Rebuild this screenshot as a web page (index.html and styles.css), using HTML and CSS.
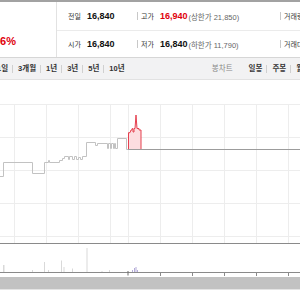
FILE: index.html
```html
<!DOCTYPE html>
<html lang="ko">
<head>
<meta charset="UTF-8">
<meta name="viewport" content="width=device-width, initial-scale=1.0">
<title>시세 차트</title>
<link rel="stylesheet" href="styles.css">
</head>
<body>
<div class="quote">
    <div class="today">
        <p class="rate"><span class="cut">+0.</span>6%</p>
    </div>
    <div class="summary">
        <div class="row">
            <div class="cell first"><span class="label">전일</span><em class="num">16,840</em></div>
            <div class="cell mid"><span class="label">고가</span><em class="num up">16,940</em><span class="sub">(상한가 21,850)</span></div>
            <div class="cell last"><span class="label">거래량</span><em class="num">152,318</em></div>
        </div>
        <div class="row">
            <div class="cell first"><span class="label">시가</span><em class="num">16,840</em></div>
            <div class="cell mid"><span class="label">저가</span><em class="num">16,840</em><span class="sub">(하한가 11,790)</span></div>
            <div class="cell last"><span class="label">거래대금</span><em class="num">2,571</em></div>
        </div>
    </div>
</div>

<div class="toolbar">
    <ul class="periods">
        <li>1일</li>
        <li>3개월</li>
        <li>1년</li>
        <li>3년</li>
        <li>5년</li>
        <li>10년</li>
    </ul>
    <ul class="types">
        <li class="title">봉차트</li>
        <li>일봉</li>
        <li>주봉</li>
        <li>월봉</li>
    </ul>
</div>

<div class="chart">
    <svg width="300" height="197" viewBox="0 0 300 197">
        <g class="grid">
            <path d="M0 24.5H300M0 57.5H300M0 90.5H300M0 123.5H300M0 156.5H300"/>
            <path d="M14.5 24V163M46.5 24V163M78.5 24V163M110.5 24V163M128.5 24V163M160.5 24V163M192.5 24V163M224.5 24V163M256.5 24V163M288.5 24V163"/>
        </g>
        <path class="area" d="M128 69V52.7H130L131 50H132V48.7H133V52H134V48.5H135L136 35L137 48.5H139V50H141V69Z"/>
        <path class="prev" d="M128 69.5H300"/>
        <path class="price" d="M0 96.5H3.5V82.5H32.5V93.5H44.5V82.5H48.5V80.5H49.5V82.5H59.5V80.5H62.5V78.5H64.5V76.5H68.5V79.5H69.5V76.5H72.5V79.5H74.5V76.5H76.5V79.5H78.5V77.5H80.5V79.5H82.5V76.5H86.5V62.5H95.5V65.5H97.5V63.5H107.5V68.5H108.5V63.5H110.5V68.5H111.5V63.5H113.5V68.5H114.5V63.5H115.5V68.5H117.5V58.5H126.5V69.5H128"/>
        <path class="price up" d="M128.5 69V52.7H130L131 50H132V48.7H133V52H134V48.5H135L136 35L137 48.5H139V50H141V69"/>
        <path class="axis" d="M0 163.5H300M0 192.5H300M160.5 192V196M192.5 192V196M224.5 192V196M256.5 192V196M288.5 192V196"/>
        <g class="volume">
            <rect x="3" y="185" width="1.5" height="7"/>
            <rect x="32" y="190" width="1" height="2"/>
            <rect x="44" y="182" width="1" height="10"/>
            <rect x="48" y="190" width="1" height="2"/>
            <rect x="61" y="180.5" width="1" height="11.5"/>
            <rect x="63.5" y="187" width="1" height="5"/>
            <rect x="72" y="188.5" width="1" height="3.5"/>
            <rect x="86.5" y="168" width="1" height="24"/>
            <rect x="101.5" y="191" width="1" height="1"/>
            <rect x="109" y="190" width="1" height="2"/>
        </g>
        <rect class="vol-down" x="127.5" y="191" width="1" height="4.5"/>
        <g class="vol-up">
            <rect x="132" y="190" width="1" height="2"/>
            <rect x="134" y="188" width="1" height="4"/>
            <rect x="135.5" y="187" width="1" height="5"/>
            <rect x="137" y="190" width="1" height="2"/>
        </g>
    </svg>
</div>

<div class="scroller"></div>
</body>
</html>
```

FILE: styles.css
```css
body {
    margin: 0;
    width: 300px;
    overflow: hidden;
    font-family: "Liberation Sans", "Noto Sans CJK KR", sans-serif;
    color: #333;
    background-color: #fff;
}

ul {
    margin: 0;
    padding: 0;
    list-style: none;
}

/* quote summary */
.quote {
    display: flex;
    height: 55px;
    border-top: 2px solid #a2a2a2;
    border-bottom: 1px solid #d6d6d6;
}

.today {
    width: 56px;
    flex-shrink: 0;
    border-right: 1px solid #e2e2e2;
    overflow: hidden;
}

.rate {
    margin: 32px 0 0 -15.6px;
    font-size: 11px;
    line-height: 14px;
    font-weight: bold;
    color: #e0000b;
    white-space: nowrap;
}

.summary {
    flex: 1;
    overflow: hidden;
}

.row {
    display: flex;
    align-items: center;
    height: 28px;
    white-space: nowrap;
}

.row + .row {
    height: 26px;
    border-top: 1px solid #ebebeb;
}

.cell {
    display: flex;
    align-items: center;
    flex-shrink: 0;
}

.cell.first {
    width: 69px;
    padding-left: 11px;
}

.cell.mid {
    width: 143px;
}

.cell.mid::before,
.cell.last::before {
    content: "";
    width: 1px;
    height: 8px;
    margin-right: 3px;
    background-color: #c8c8c8;
}

.label {
    font-size: 7px;
    color: #333;
}

.num {
    margin-left: 6px;
    font-style: normal;
    font-weight: bold;
    font-size: 9px;
    color: #111;
}

.num.up {
    color: #e0000b;
}

.sub {
    margin-left: 1px;
    font-size: 7.5px;
    color: #666;
}

/* period / type bar */
.toolbar {
    display: flex;
    height: 21px;
    line-height: 21px;
    background-color: #f2f2f3;
    border-bottom: 1px solid #e2e2e2;
    overflow: hidden;
    white-space: nowrap;
    font-size: 7.5px;
    font-weight: bold;
    color: #333;
}

.toolbar ul {
    display: flex;
    align-items: center;
    flex-shrink: 0;
}

.toolbar li {
    display: flex;
    align-items: center;
    padding: 0 4px;
}

.toolbar li + li::before {
    content: "";
    width: 1px;
    height: 8px;
    margin: 0 5px 0 -4px;
    background-color: #d0d0d0;
}

.periods {
    margin-left: -3px;
}

.periods li:first-child {
    padding-left: 0;
}

.types {
    margin-left: auto;
    margin-right: -14px;
}

.types .title {
    padding-right: 12px;
    font-weight: normal;
    color: #888;
}

.types .title + li::before {
    display: none;
}

/* chart */
.chart svg {
    display: block;
}

.grid path {
    fill: none;
    stroke: #ededed;
    stroke-width: 1;
    shape-rendering: crispEdges;
}

.area {
    fill: #fcdde0;
}

.prev {
    fill: none;
    stroke: #9c9c9c;
    stroke-width: 1;
    shape-rendering: crispEdges;
}

.price {
    fill: none;
    stroke: #c2c2c2;
    stroke-width: 1;
}

.price.up {
    stroke: #e5404f;
}

.axis {
    fill: none;
    stroke: #8a8a8a;
    stroke-width: 1;
    shape-rendering: crispEdges;
}

.volume rect {
    fill: #d9d9d9;
}

.vol-down {
    fill: #6e6e6e;
}

.vol-up rect {
    fill: #b4acd8;
}

.scroller {
    height: 12px;
    background-color: #c2c2c2;
    border-bottom: 1px solid #e4e4e4;
}
```
